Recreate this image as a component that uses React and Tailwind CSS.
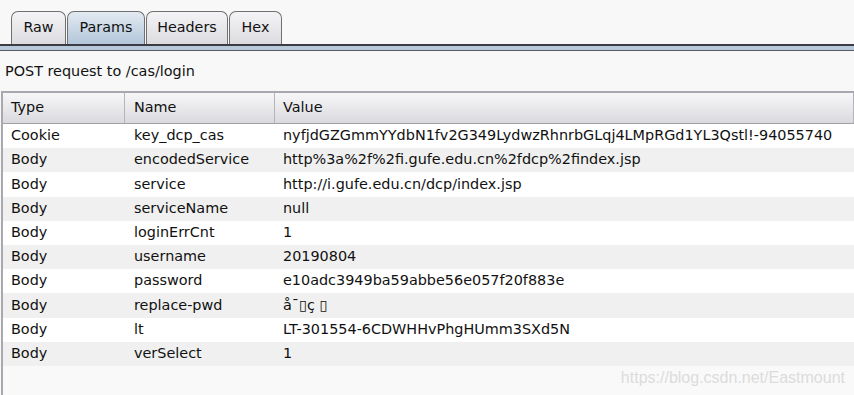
import React from "react";

const rows = [
  ["Cookie", "key_dcp_cas", "nyfjdGZGmmYYdbN1fv2G349LydwzRhnrbGLqj4LMpRGd1YL3Qstl!-94055740"],
  ["Body", "encodedService", "http%3a%2f%2fi.gufe.edu.cn%2fdcp%2findex.jsp"],
  ["Body", "service", "http://i.gufe.edu.cn/dcp/index.jsp"],
  ["Body", "serviceName", "null"],
  ["Body", "loginErrCnt", "1"],
  ["Body", "username", "20190804"],
  ["Body", "password", "e10adc3949ba59abbe56e057f20f883e"],
  ["Body", "replace-pwd", "å¯\u25AFç \u25AF"],
  ["Body", "lt", "LT-301554-6CDWHHvPhgHUmm3SXd5N"],
  ["Body", "verSelect", "1"],
];

const tabs = [
  { label: "Raw", w: "w-[55px]", active: false },
  { label: "Params", w: "w-[78px]", active: true },
  { label: "Headers", w: "w-[82px]", active: false },
  { label: "Hex", w: "w-[53px]", active: false },
];

export default function App() {
  return (
    <div
      className="w-[854px] h-[395px] overflow-hidden bg-[#f8f8f8] text-[#111] flex flex-col"
      style={{ fontFamily: '"DejaVu Sans", Verdana, sans-serif' }}
    >
      {/* tab bar */}
      <div className="pt-[11px] pl-[11px] flex items-end h-[44px]">
        {tabs.map((t) => (
          <div
            key={t.label}
            className={`${t.w} h-[33px] mr-[1px] border border-b-0 border-[#707070] rounded-t-[7px] flex items-center justify-center text-[14.3px] ${
              t.active
                ? "bg-gradient-to-b from-[#e2eaf2] to-[#b3c6d9]"
                : "bg-gradient-to-b from-[#f4f4f6] to-[#dcdce0]"
            }`}
          >
            {t.label}
          </div>
        ))}
      </div>
      <div className="h-[2px] bg-[#3c3c44]" />
      <div className="h-[4px] bg-[#b7c9da]" />
      <div className="h-[1px] bg-[#5a5a62]" />

      <div className="h-[40px] flex items-center pl-[5px] text-[14.4px] pt-[1px]">
        POST request to /cas/login
      </div>

      {/* table */}
      <div className="flex-1 ml-[1px] border-l-2 border-t-2 border-[#a8a8ae] flex flex-col text-[14.4px]">
        <div className="h-[31px] shrink-0 flex bg-gradient-to-b from-[#f7f7f9] to-[#dadade] border-b border-[#a0a0a6]">
          <div className="w-[122px] pl-[8px] flex items-center border-r border-[#b4b4ba]">Type</div>
          <div className="w-[150px] pl-[9px] flex items-center border-r border-[#b4b4ba]">Name</div>
          <div className="flex-1 pl-[8px] flex items-center border-r border-[#b4b4ba]">Value</div>
        </div>
        {rows.map((r, i) => (
          <div
            key={i}
            className={`h-[24.2px] shrink-0 flex items-center ${i % 2 === 0 ? "bg-white" : "bg-[#f0f0f0]"}`}
          >
            <div className="w-[122px] pl-[8px]">{r[0]}</div>
            <div className="w-[150px] pl-[9px]">{r[1]}</div>
            <div className="flex-1 pl-[8px] whitespace-nowrap">{r[2]}</div>
          </div>
        ))}
        <div className="flex-1 relative bg-[#f9f9f9]">
          <div
            className="absolute right-[9px] bottom-[5px] text-[16px] text-[#dcdcdc]"
            style={{ fontFamily: '"Liberation Sans", Arial, sans-serif' }}
          >
            https://blog.csdn.net/Eastmount
          </div>
        </div>
      </div>
    </div>
  );
}
